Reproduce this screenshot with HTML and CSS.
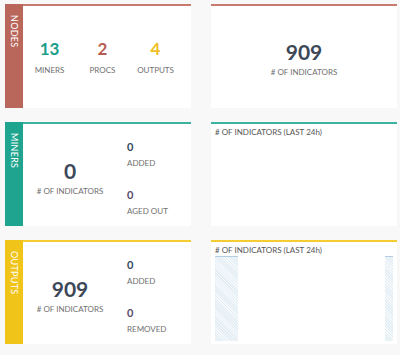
FILE: index.html
```html
<!DOCTYPE html>
<html lang="en">
<head>
    <meta charset="UTF-8">
    <meta name="viewport" content="width=device-width, initial-scale=1.0">
    <title>Dashboard</title>
    <link rel="stylesheet" href="styles.css">
</head>
<body>
    <div class="dashboard">

        <!-- NODES row -->
        <div class="card nodes">
            <div class="side"><span>NODES</span></div>
            <div class="body stats">
                <div class="stat">
                    <div class="num teal">13</div>
                    <div class="label">MINERS</div>
                </div>
                <div class="stat">
                    <div class="num red">2</div>
                    <div class="label">PROCS</div>
                </div>
                <div class="stat">
                    <div class="num yellow">4</div>
                    <div class="label">OUTPUTS</div>
                </div>
            </div>
        </div>
        <div class="card panel nodes">
            <div class="body total">
                <div class="big">909</div>
                <div class="label"># OF INDICATORS</div>
            </div>
        </div>

        <!-- MINERS row -->
        <div class="card miners">
            <div class="side"><span>MINERS</span></div>
            <div class="body split">
                <div class="main">
                    <div class="big">0</div>
                    <div class="label"># OF INDICATORS</div>
                </div>
                <div class="deltas">
                    <div class="small blue">0</div>
                    <div class="label">ADDED</div>
                    <div class="small purple second">0</div>
                    <div class="label">AGED OUT</div>
                </div>
            </div>
        </div>
        <div class="card panel miners">
            <div class="body chart-box">
                <div class="title"># OF INDICATORS (LAST 24h)</div>
            </div>
        </div>

        <!-- OUTPUTS row -->
        <div class="card outputs">
            <div class="side"><span>OUTPUTS</span></div>
            <div class="body split">
                <div class="main">
                    <div class="big">909</div>
                    <div class="label"># OF INDICATORS</div>
                </div>
                <div class="deltas">
                    <div class="small blue">0</div>
                    <div class="label">ADDED</div>
                    <div class="small purple second">0</div>
                    <div class="label">REMOVED</div>
                </div>
            </div>
        </div>
        <div class="card panel outputs">
            <div class="body chart-box">
                <div class="title"># OF INDICATORS (LAST 24h)</div>
                <div class="chart">
                    <div class="bar wide"></div>
                    <div class="bar narrow"></div>
                </div>
            </div>
        </div>

    </div>
</body>
</html>
```

FILE: styles.css
```css
body {
    margin: 0;
    padding: 4px 0 0 5px;
    background-color: #f8f8f8;
    font-family: Lato, "Open Sans", sans-serif;
    color: #3c4858;
}

.dashboard {
    display: grid;
    grid-template-columns: 186px 186px;
    column-gap: 20px;
    row-gap: 14px;
}

.card {
    display: flex;
    height: 104px;
    background: #fff;
}

.side {
    width: 18px;
    flex-shrink: 0;
    color: #fff;
    font-size: 9px;
    padding-top: 11px;
    box-sizing: border-box;
    display: flex;
    justify-content: center;
}

.side span {
    writing-mode: vertical-rl;
    letter-spacing: 0.3px;
}

.body {
    flex: 1;
    border-top: 2px solid;
}

.nodes .side { background: #b9665b; }
.nodes .body { border-top-color: #c97a70; }
.miners .side { background: #1fa58f; }
.miners .body { border-top-color: #3db39f; }
.outputs .side { background: #f0c419; }
.outputs .body { border-top-color: #f5cd32; }

.label {
    font-size: 8px;
    line-height: 11px;
    color: #707070;
}

.num {
    font-size: 17px;
    line-height: 20px;
    font-weight: bold;
    margin-bottom: 6px;
}

.teal { color: #1a9e8a; }
.red { color: #b85c50; }
.yellow { color: #f0c020; }
.blue { color: #34495e; }
.purple { color: #5b4a6b; }

.stats {
    display: flex;
    align-items: center;
}

.stat {
    width: 53px;
    text-align: center;
}

.total {
    display: flex;
    flex-direction: column;
    align-items: center;
    justify-content: center;
    padding-top: 4px;
}

.big {
    font-size: 21px;
    line-height: 24px;
    font-weight: bold;
    margin-bottom: 3px;
}

.split {
    display: flex;
}

.main {
    width: 94px;
    display: flex;
    flex-direction: column;
    align-items: center;
    justify-content: center;
    padding-top: 5px;
}

.deltas {
    margin-left: 10px;
    padding-top: 16px;
}

.small {
    font-size: 11px;
    line-height: 13px;
    font-weight: bold;
    margin-bottom: 5px;
}

.small.second {
    margin-top: 19px;
}

.chart-box {
    padding: 3px 4px;
    display: flex;
    flex-direction: column;
}

.title {
    font-size: 8px;
    line-height: 11px;
    color: #555;
}

.chart {
    flex: 1;
    display: flex;
    justify-content: space-between;
}

.bar {
    border-top: 1px solid #b4cde0;
    background: repeating-linear-gradient(45deg, #e2edf4 0 1px, #f6f9fb 1px 2px);
}

.bar.wide { width: 23px; }
.bar.narrow { width: 8px; }
```
